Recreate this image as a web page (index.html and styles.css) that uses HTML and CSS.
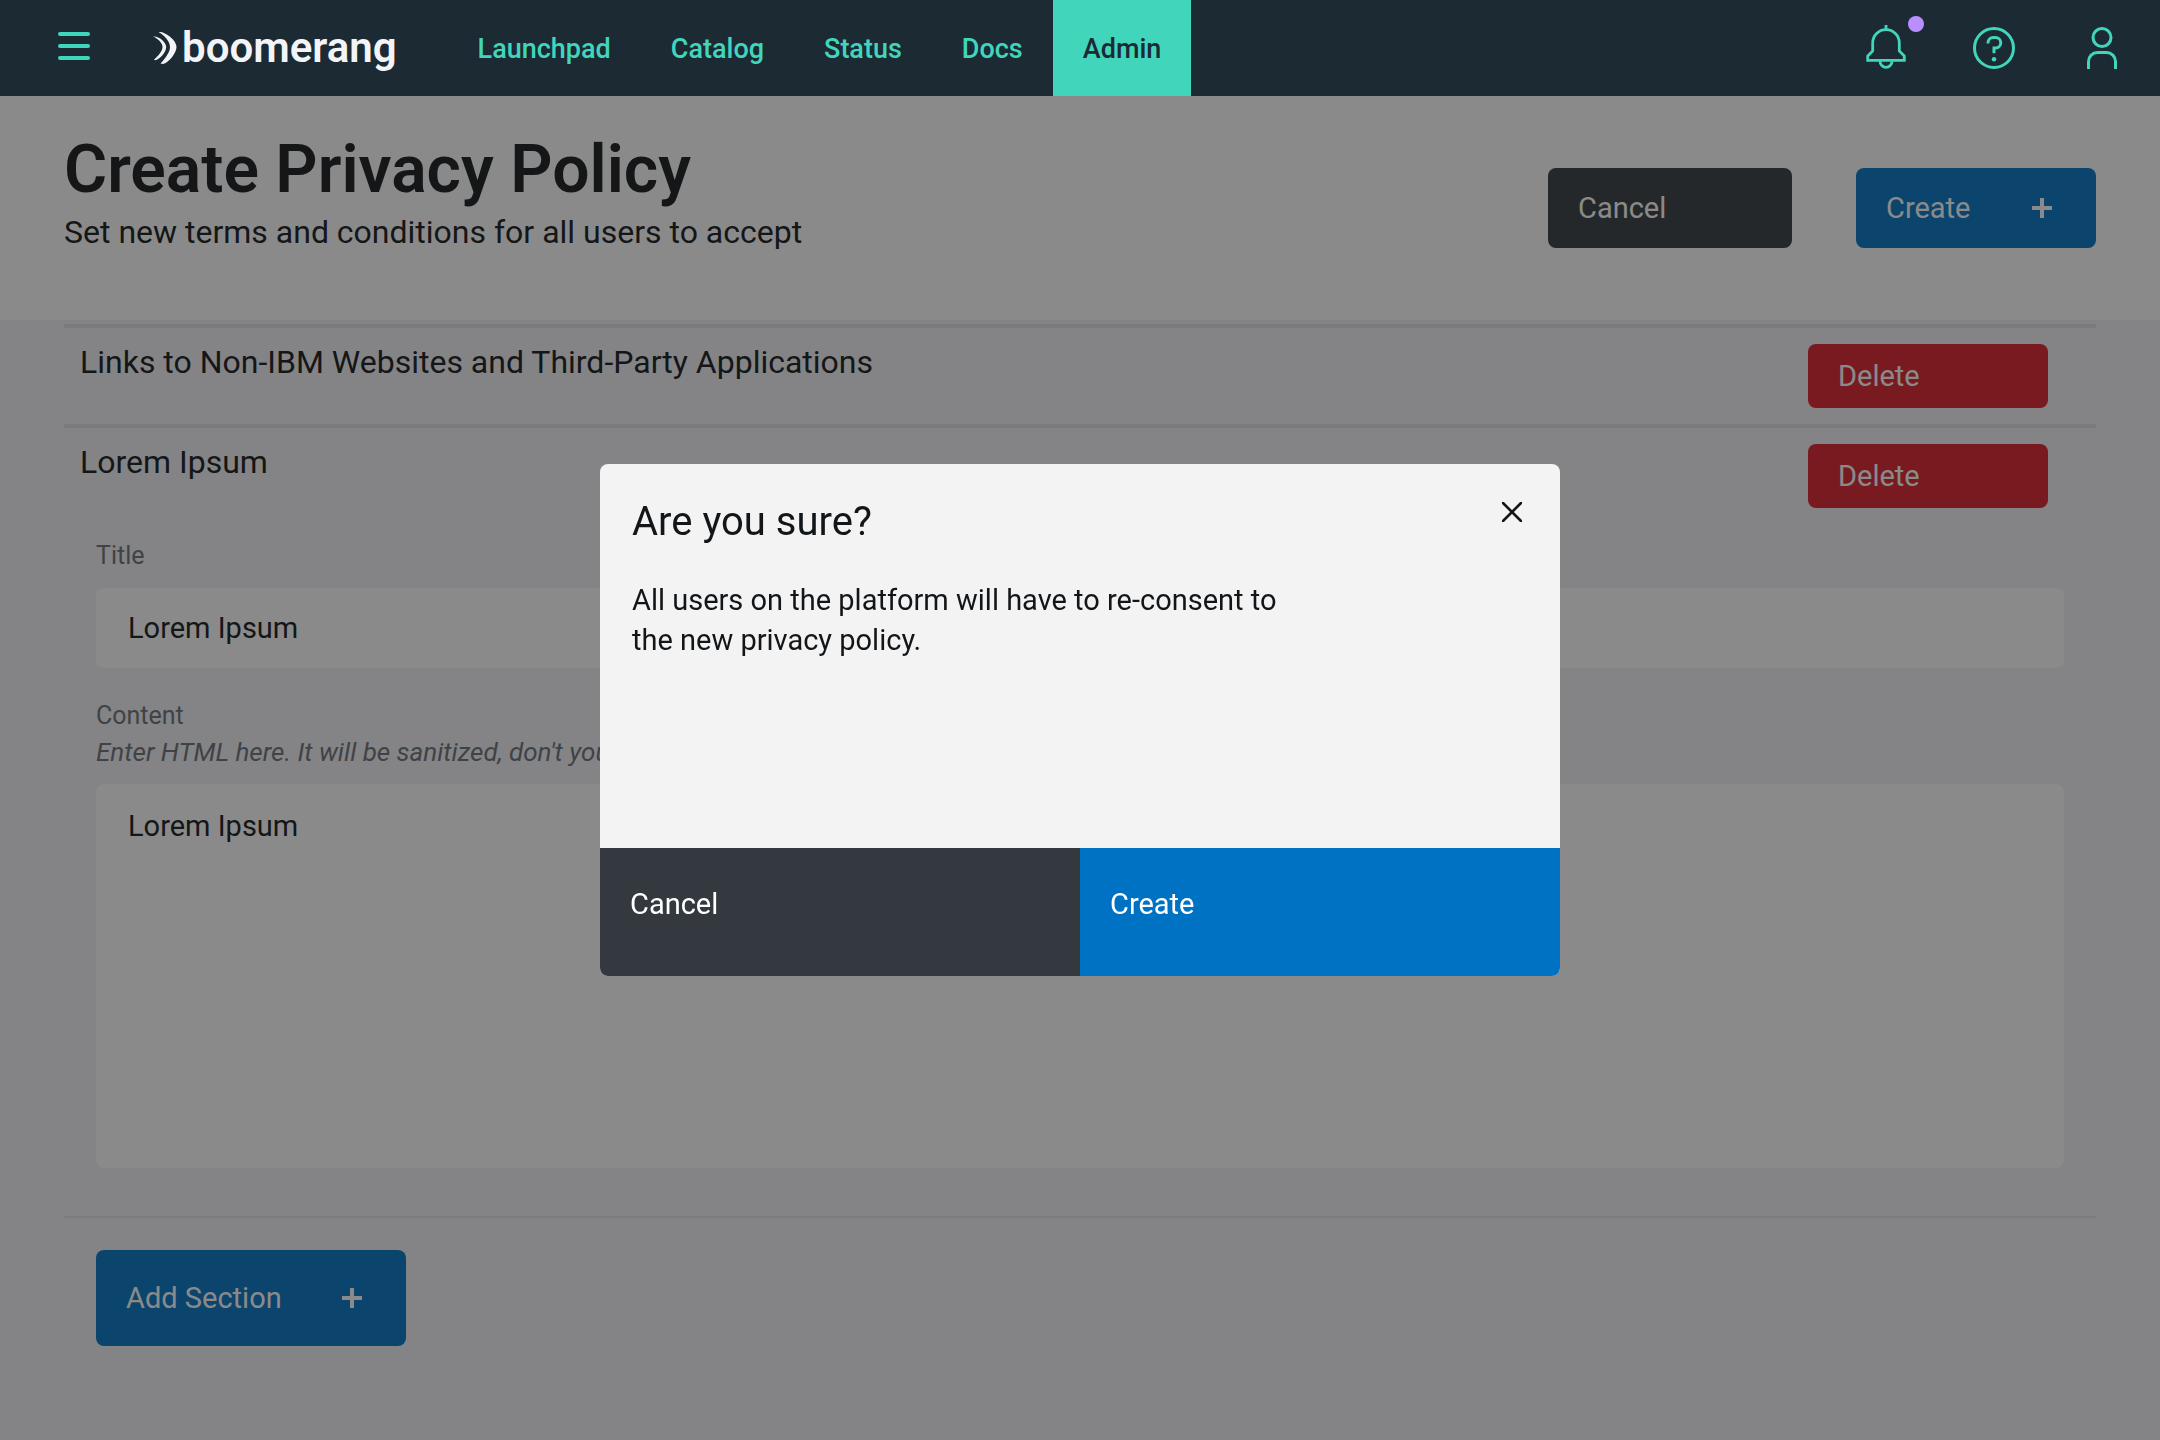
FILE: index.html
```html
<!DOCTYPE html>
<html lang="en">
<head>
  <meta charset="utf-8">
  <meta name="viewport" content="width=device-width, initial-scale=1">
  <title>Create Privacy Policy</title>
  <link rel="stylesheet" href="styles.css">
</head>
<body>
  <header class="topbar">
    <button class="menu-button" type="button" aria-label="Open menu">
      <span class="menu-bar"></span>
      <span class="menu-bar"></span>
      <span class="menu-bar"></span>
    </button>
    <a class="brand" href="#">
      <svg class="brand-mark" viewBox="0 0 26 36" aria-hidden="true">
        <path d="M6.5 2C13 1.2 24.5 10 24.5 17C24.5 23 16.5 33 11 34L8.5 33.5C13.5 28 18 22 18 17C18 11 12 5 6.5 2Z"/>
        <path d="M1 6.5C6.5 5.7 14.2 12 14.2 17C14.2 22 8 29.3 3 30.3L2 29.7C7 25 10.5 21 10.5 17C10.5 13 6 8.5 1 6.5Z"/>
      </svg>
      <span>boomerang</span>
    </a>
    <nav class="nav" aria-label="Main">
      <a class="nav-link" href="#">Launchpad</a>
      <a class="nav-link" href="#">Catalog</a>
      <a class="nav-link" href="#">Status</a>
      <a class="nav-link" href="#">Docs</a>
      <a class="nav-link nav-link-active" href="#" aria-current="page">Admin</a>
    </nav>
    <div class="tools">
      <button class="tool" type="button" aria-label="Notifications">
        <svg viewBox="0 0 48 48" aria-hidden="true">
          <g fill="none" stroke="currentColor" stroke-width="2.8">
            <path d="M24 1V6"/>
            <path d="M10.7 19A13.3 13.3 0 0 1 37.3 19V27L42.3 32V36.3H5.7V32L10.7 27Z"/>
            <path d="M18 37.3A6 6 0 0 0 30 37.3"/>
          </g>
        </svg>
        <span class="tool-badge"></span>
      </button>
      <button class="tool" type="button" aria-label="Help">
        <svg viewBox="0 0 32 32" aria-hidden="true">
          <circle cx="16" cy="16" r="13" fill="none" stroke="currentColor" stroke-width="2"/>
          <circle cx="16" cy="23.5" r="1.5" fill="currentColor"/>
          <path fill="currentColor" d="M17 8h-1.5A4.5 4.5 0 0 0 11 12.5V13h2v-.5A2.5 2.5 0 0 1 15.5 10H17a2.5 2.5 0 0 1 0 5h-2v4.5h2V17a4.5 4.5 0 0 0 0-9z"/>
        </svg>
      </button>
      <button class="tool" type="button" aria-label="Profile">
        <svg viewBox="0 0 32 32" aria-hidden="true">
          <g fill="none" stroke="currentColor" stroke-width="2">
            <circle cx="16" cy="9" r="6"/>
            <path d="M7 30V25A6 6 0 0 1 13 19H19A6 6 0 0 1 25 25V30"/>
          </g>
        </svg>
      </button>
    </div>
  </header>

  <section class="page-header">
    <div class="page-heading">
      <h1 class="page-title">Create Privacy Policy</h1>
      <p class="page-subtitle">Set new terms and conditions for all users to accept</p>
    </div>
    <div class="page-actions">
      <button class="button button-secondary" type="button">Cancel</button>
      <button class="button button-primary" type="button">
        Create
        <svg class="plus" viewBox="0 0 20 20" aria-hidden="true"><path d="M8 0h4v8h8v4h-8v8H8v-8H0V8h8z"/></svg>
      </button>
    </div>
  </section>

  <main class="content">
    <ul class="sections">
      <li class="section">
        <div class="section-head">
          <h2 class="section-title">Links to Non-IBM Websites and Third-Party Applications</h2>
          <button class="button button-danger" type="button">Delete</button>
        </div>
      </li>
      <li class="section">
        <div class="section-head">
          <h2 class="section-title">Lorem Ipsum</h2>
          <button class="button button-danger" type="button">Delete</button>
        </div>
        <div class="fields">
          <div class="field">
            <label class="label" for="section-name">Title</label>
            <input class="control" id="section-name" type="text" value="Lorem Ipsum">
          </div>
          <div class="field">
            <label class="label" for="section-content">Content</label>
            <p class="helper" id="content-help">Enter HTML here. It will be sanitized, don't you worry.</p>
            <textarea class="control control-area" id="section-content" aria-describedby="content-help">Lorem Ipsum</textarea>
          </div>
        </div>
      </li>
    </ul>
    <div class="add-row">
      <button class="button button-primary button-add" type="button">
        Add Section
        <svg class="plus" viewBox="0 0 20 20" aria-hidden="true"><path d="M8 0h4v8h8v4h-8v8H8v-8H0V8h8z"/></svg>
      </button>
    </div>
  </main>

  <div class="scrim">
    <div class="modal" role="dialog" aria-modal="true" aria-labelledby="modal-title">
      <div class="modal-body">
        <div class="modal-head">
          <h2 class="modal-title" id="modal-title">Are you sure?</h2>
          <button class="modal-close" type="button" aria-label="Close">
            <svg viewBox="0 0 20 20" aria-hidden="true"><path d="M1 1L19 19M19 1L1 19"/></svg>
          </button>
        </div>
        <p class="modal-text">All users on the platform will have to re-consent to the new privacy policy.</p>
      </div>
      <div class="modal-footer">
        <button class="modal-button modal-cancel" type="button">Cancel</button>
        <button class="modal-button modal-create" type="button">Create</button>
      </div>
    </div>
  </div>
</body>
</html>
```
FILE: styles.css
```css
* {
  box-sizing: border-box;
}

body {
  margin: 0;
  min-height: 100vh;
  background: #f2f2f6;
  color: #121619;
  font-family: Roboto, "Liberation Sans", sans-serif;
  font-size: 29px;
  line-height: 36px;
}

h1, h2, p, ul {
  margin: 0;
  padding: 0;
  font-weight: 400;
}

button, input, textarea {
  font: inherit;
  color: inherit;
  border: 0;
  margin: 0;
}

button {
  padding: 0;
  background: none;
  text-align: left;
  cursor: pointer;
}

a {
  color: inherit;
  text-decoration: none;
}

svg {
  display: block;
}

/* Top bar */

.topbar {
  position: sticky;
  top: 0;
  z-index: 2;
  display: flex;
  align-items: center;
  height: 96px;
  padding: 0 34px 0 58px;
  background: #1c2a34;
  color: #41d6bb;
}

.menu-button {
  display: flex;
  flex-direction: column;
  gap: 8px;
  width: 32px;
  height: 32px;
}

.menu-bar {
  height: 4px;
  border-radius: 2px;
  background: currentColor;
}

.brand {
  display: flex;
  align-items: center;
  gap: 4px;
  margin: 0 51px 0 62px;
  color: #f2f4f8;
  font-size: 42px;
  font-weight: 600;
  line-height: 48px;
}

.brand-mark {
  width: 26px;
  height: 36px;
  fill: currentColor;
}

.nav {
  display: flex;
  align-self: stretch;
  font-size: 27px;
  font-weight: 500;
}

.nav-link {
  display: flex;
  align-items: center;
  padding: 2px 30px 0;
}

.nav-link-active {
  background: #41d6bb;
  color: #1c2a34;
}

.tools {
  display: flex;
  gap: 60px;
  margin-left: auto;
}

.tool {
  position: relative;
  width: 48px;
  height: 48px;
}

.tool-badge {
  position: absolute;
  top: -8px;
  right: -14px;
  width: 16px;
  height: 16px;
  border-radius: 50%;
  background: #bb8eff;
}

/* Page header */

.page-header {
  display: flex;
  align-items: center;
  justify-content: space-between;
  min-height: 224px;
  padding: 0 64px;
  background: #fff;
}

.page-heading {
  align-self: flex-start;
  padding-top: 36px;
}

.page-title {
  font-size: 66px;
  font-weight: 600;
  line-height: 76px;
}

.page-subtitle {
  font-size: 32px;
  line-height: 48px;
}

.page-actions {
  display: flex;
  gap: 64px;
}

.button {
  display: flex;
  align-items: center;
  justify-content: space-between;
  min-width: 240px;
  height: 80px;
  padding: 0 44px 0 30px;
  border-radius: 8px;
  color: #fff;
}

.button-primary {
  background: #0072c3;
}

.button-secondary {
  min-width: 244px;
  background: #343a3f;
}

.button-danger {
  height: 64px;
  background: #da1e28;
}

.button-add {
  min-width: 310px;
  height: 96px;
}

.plus {
  width: 20px;
  height: 20px;
  fill: currentColor;
}

/* Policy sections */

.content {
  padding: 4px 64px 60px;
}

.sections {
  list-style: none;
}

.section {
  border-top: 4px solid #dde1e6;
}

.section-head {
  display: flex;
  align-items: flex-start;
  justify-content: space-between;
  padding: 16px 48px 16px 16px;
}

.section-title {
  font-size: 32px;
}

.fields {
  display: grid;
  gap: 32px;
  padding: 16px 32px 48px;
}

.field {
  display: flex;
  flex-direction: column;
}

.label,
.helper {
  color: #697077;
  font-size: 25px;
  line-height: 32px;
}

.helper {
  margin-top: 4px;
  font-size: 26px;
  font-style: italic;
}

.control {
  width: 100%;
  height: 80px;
  margin-top: 16px;
  padding: 0 32px;
  border-radius: 8px;
  background: #fff;
}

.control-area {
  height: 384px;
  padding: 24px 32px;
  resize: none;
}

.add-row {
  padding: 32px;
  border-top: 2px solid #dde1e6;
}

/* Confirmation dialog */

.scrim {
  position: fixed;
  inset: 0;
  z-index: 1;
  display: flex;
  align-items: center;
  justify-content: center;
  background: rgba(22, 22, 22, 0.5);
}

.modal {
  display: flex;
  flex-direction: column;
  width: 960px;
  max-width: 90%;
  min-height: 512px;
  overflow: hidden;
  border-radius: 8px;
  background: #f3f3f3;
}

.modal-body {
  flex: 1;
  padding: 32px;
}

.modal-head {
  display: flex;
  align-items: flex-start;
  justify-content: space-between;
}

.modal-title {
  font-size: 40px;
  line-height: 52px;
}

.modal-close {
  display: flex;
  align-items: center;
  justify-content: center;
  width: 32px;
  height: 32px;
}

.modal-close svg {
  width: 20px;
  height: 20px;
  fill: none;
  stroke: currentColor;
  stroke-width: 2.6;
  stroke-linecap: round;
}

.modal-text {
  max-width: 75%;
  margin-top: 32px;
  line-height: 40px;
}

.modal-footer {
  display: grid;
  grid-template-columns: 1fr 1fr;
}

.modal-button {
  display: flex;
  align-items: flex-start;
  height: 128px;
  padding: 38px 30px;
  color: #fff;
}

.modal-cancel {
  background: #33393f;
}

.modal-create {
  background: #0072c3;
}
```
